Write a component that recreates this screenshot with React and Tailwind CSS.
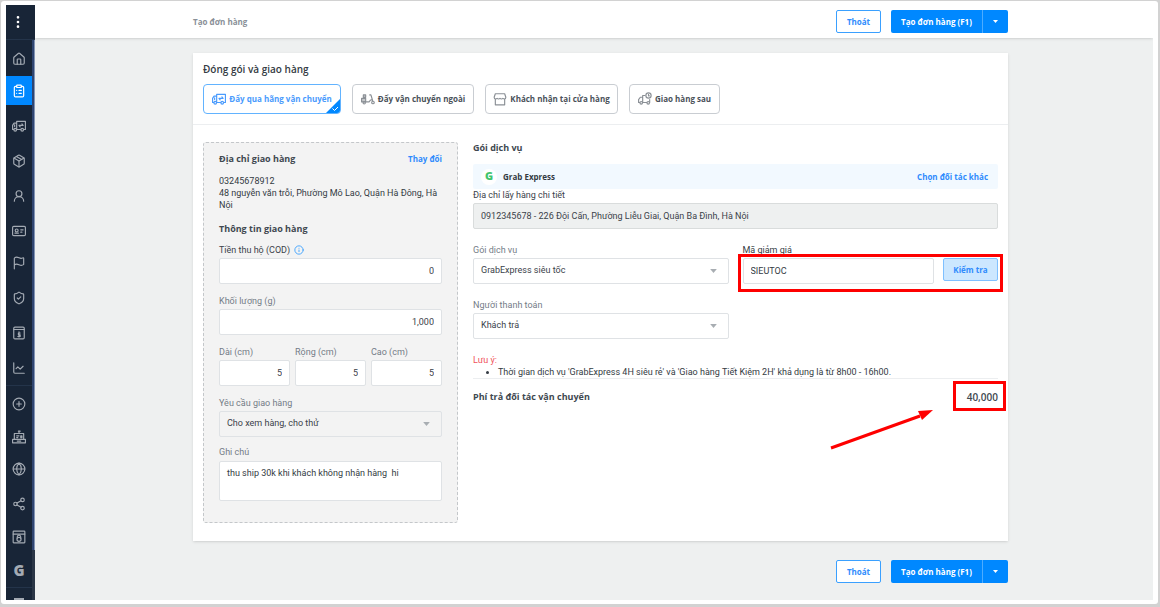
import {
  ChartLine,
  CirclePlus,
  ClipboardList,
  EllipsisVertical,
  Flag,
  Globe,
  House,
  Info,
  Package,
  ShieldCheck,
  Share2,
  UserRound,
} from "lucide-react";
import clsx from "clsx";

function StrokeIcon({ children, className }) {
  return (
    <svg
      viewBox="0 0 24 24"
      fill="none"
      stroke="currentColor"
      strokeWidth="2"
      strokeLinecap="round"
      strokeLinejoin="round"
      className={className}
      aria-hidden="true"
    >
      {children}
    </svg>
  );
}

function TruckIcon({ className }) {
  return (
    <StrokeIcon className={className}>
      <path d="M8 17V4h15v14h-3M8 7H3.500L1 11v7h2M15 18H8" />
      <circle cx="5.500" cy="18.500" r="2.300" />
      <circle cx="17.500" cy="18.500" r="2.300" />
      <path d="M4.500 10v3M12 11h7M12 11l2 2.500M19 11l-2-2.500" />
    </StrokeIcon>
  );
}

function CardIcon({ className }) {
  return (
    <StrokeIcon className={className}>
      <rect x="1" y="4" width="22" height="16" rx="2" />
      <circle cx="8" cy="11" r="2.500" />
      <path d="M5 15.500h6M15 10h4M15 14h2" />
    </StrokeIcon>
  );
}

function CashBookIcon({ className }) {
  return (
    <StrokeIcon className={className}>
      <rect x="3" y="2" width="18" height="20" rx="2" />
      <path d="M3 6h18M12 10v9M14 12h-3v3h3v3h-4" />
    </StrokeIcon>
  );
}

function CounterIcon({ className }) {
  return (
    <StrokeIcon className={className}>
      <path d="M4 16V6h16v10M1 16h22v6H1zM12 6V2M11 2h3M8 10h4M8 13h2M15 10h2v3h-2zM9 19h6" />
    </StrokeIcon>
  );
}

function WindowIcon({ className }) {
  return (
    <StrokeIcon className={className}>
      <rect x="2" y="2" width="20" height="20" rx="1" />
      <path d="M2 7h20M9 14v-2a3 3 0 0 1 6 0v2" />
      <circle cx="12" cy="16" r="3.500" />
    </StrokeIcon>
  );
}

function ScooterIcon({ className }) {
  return (
    <StrokeIcon className={className}>
      <path d="M1 11h7v6H1zM4 5h4v4H4z" fill="currentColor" fillOpacity="0.5" />
      <path d="M15 5h2l3 10M9 17h5c1-3 3-4 5-4" />
      <circle cx="5.500" cy="18.500" r="2" />
      <circle cx="20.500" cy="18" r="2.200" />
    </StrokeIcon>
  );
}

function StoreIcon({ className }) {
  return (
    <StrokeIcon className={className}>
      <path d="M4 3h16l2 6c0 2-1 3-2.500 3S17 11 17 11s-1 1-2.500 1S12 11 12 11s-1 1-2.500 1S7 11 7 11s-1 1-2.500 1S2 11 2 9zM4 12v10h16V12" />
    </StrokeIcon>
  );
}

function LaterIcon({ className }) {
  return (
    <StrokeIcon className={className}>
      <circle cx="18" cy="6" r="4.500" />
      <path d="M18 4v2.500h1.500M12 6H8v12M8 9H4l-3 4v5h2M8 18h7M20 13v5" />
      <circle cx="5.500" cy="18.500" r="2.200" />
      <circle cx="17.500" cy="18.500" r="2.200" />
    </StrokeIcon>
  );
}

function LetterIcon() {
  return <span className="text-[15px] leading-4 font-extrabold">G</span>;
}

const navItems = [
  { label: "Tổng quan", icon: House, className: "mt-1" },
  { label: "Đơn hàng", icon: ClipboardList, className: "mt-[3px]", active: true },
  { label: "Vận chuyển", icon: TruckIcon, className: "mt-1.5" },
  { label: "Sản phẩm", icon: Package, className: "mt-1.5" },
  { label: "Khách hàng", icon: UserRound, className: "mt-1.5" },
  { label: "Thẻ", icon: CardIcon, className: "mt-1.5" },
  { label: "Khuyến mại", icon: Flag, className: "mt-[3px]" },
  { label: "Bảo hành", icon: ShieldCheck, className: "mt-1.5" },
  { label: "Sổ quỹ", icon: CashBookIcon, className: "mt-1.5" },
  { label: "Báo cáo", icon: ChartLine, className: "mt-1.5" },
];

const channelItems = [
  { label: "Thêm kênh", icon: CirclePlus, className: "mt-[3px]" },
  { label: "Bán tại quầy", icon: CounterIcon, className: "mt-1" },
  { label: "Website", icon: Globe, className: "mt-[3px]" },
  { label: "Mạng xã hội", icon: Share2, className: "mt-1.5" },
  { label: "Sàn", icon: WindowIcon, className: "mt-1" },
  { label: "Google", icon: LetterIcon, className: "mt-1" },
];

const shippingMethods = [
  { label: "Đẩy qua hãng vận chuyển", icon: TruckIcon, className: "w-[138px]", active: true },
  { label: "Đẩy vận chuyển ngoài", icon: ScooterIcon, className: "w-[122px]" },
  { label: "Khách nhận tại cửa hàng", icon: StoreIcon, className: "w-[133px]" },
  { label: "Giao hàng sau", icon: LaterIcon, className: "w-[91px]" },
];

function NavItem({ item }) {
  const Icon = item.icon;

  return (
    <a
      href="#"
      aria-label={item.label}
      className={clsx(
        "flex h-[29px] shrink-0 items-center justify-center",
        item.className,
        item.active ? "bg-[#0088ff] text-white" : "text-[#a3aab3]",
      )}
    >
      <Icon className="size-3.5" />
    </a>
  );
}

function Sidebar() {
  return (
    <aside className="flex w-[29px] shrink-0 flex-col overflow-hidden bg-[#182537] font-['Open_Sans',sans-serif]">
      <button
        type="button"
        aria-label="Menu"
        className="flex h-[35px] shrink-0 items-center border-b border-[#24344a] pl-1 text-white"
      >
        <EllipsisVertical className="size-4" strokeWidth={2} />
      </button>
      <div className="flex min-h-0 flex-1">
        <nav className="flex flex-1 flex-col overflow-hidden">
          {navItems.map((item) => (
            <NavItem key={item.label} item={item} />
          ))}
          <div className="mt-[3px] h-px shrink-0 bg-[#24344a]" />
          {channelItems.map((item) => (
            <NavItem key={item.label} item={item} />
          ))}
          <div className="mt-[3px] h-px shrink-0 bg-[#24344a]" />
          <div className="mx-auto mt-2.5 h-3 w-2.5 shrink-0 border-t-2 border-[#a3aab3]" />
        </nav>
        <div className="w-[3px] bg-[#2a3646]">
          <div className="h-[91%] border-r border-[#8294b5] bg-[#2f4570]" />
        </div>
      </div>
    </aside>
  );
}

function ActionButtons() {
  return (
    <div className="flex gap-2.5 font-['Open_Sans',sans-serif] text-[8px] font-bold">
      <button
        type="button"
        className="h-[23px] w-[45px] rounded-[2px] border border-[#3aa0ff] bg-white text-[#2f8bfd]"
      >
        Thoát
      </button>
      <div className="flex h-[23px] overflow-hidden rounded-[2px] bg-[#0088ff] text-white">
        <button type="button" className="w-[92px] border-r border-[#4dacff]">
          Tạo đơn hàng (F1)
        </button>
        <button type="button" aria-label="Tùy chọn khác" className="flex w-[25px] items-center justify-center">
          <Caret className="h-[3px] w-[5px]" />
        </button>
      </div>
    </div>
  );
}

function Caret({ className }) {
  return (
    <svg viewBox="0 0 10 6" fill="currentColor" className={className} aria-hidden="true">
      <path d="M0 0h10L5 6z" />
    </svg>
  );
}

function ShippingMethod({ method }) {
  const Icon = method.icon;

  return (
    <button
      type="button"
      aria-pressed={Boolean(method.active)}
      className={clsx(
        "relative flex h-[30px] items-center justify-center gap-[3px] overflow-hidden rounded-[4px] border font-['Open_Sans',sans-serif] text-[8px] font-bold whitespace-nowrap",
        method.className,
        method.active ? "border-[#62b3ff] text-[#4a9bfd]" : "border-[#c9cdd2] text-[#4a5159]",
      )}
    >
      <Icon className={clsx("size-3.5 shrink-0", !method.active && "text-[#8b9096]")} />
      {method.label}
      {method.active ? (
        <svg viewBox="0 0 14 14" className="absolute right-0 bottom-0 size-3.5" aria-hidden="true">
          <path d="M14 0v14H0z" fill="#0088ff" />
          <path d="M6.500 9.500l2 2 3.500-3.500" fill="none" stroke="#fff" />
        </svg>
      ) : null}
    </button>
  );
}

function TextField({ id, label, value, numeric, hint, strong, readOnly }) {
  return (
    <div className="flex min-w-0 flex-col">
      <label
        htmlFor={id}
        className={clsx("flex items-center gap-1 leading-3", strong ? "text-[#3b424a]" : "text-[#747c87]")}
      >
        {label}
        {hint ? <Info className="size-2.5 text-[#2f9bff]" /> : null}
      </label>
      <input
        id={id}
        type="text"
        defaultValue={value}
        readOnly={readOnly}
        className={clsx(
          "mt-0.5 h-[26px] w-full rounded-[2px] border px-[7px] text-[#3b424a]",
          numeric && "text-right",
          readOnly ? "border-[#d9dcdc] bg-[#eef0f0]" : "border-[#dfe2e5] bg-white",
        )}
      />
    </div>
  );
}

function SelectField({ id, label, value, muted }) {
  return (
    <div className="flex min-w-0 flex-col">
      <label htmlFor={id} className="leading-3 text-[#747c87]">
        {label}
      </label>
      <div className="relative mt-0.5">
        <select
          id={id}
          defaultValue={value}
          className={clsx(
            "h-[26px] w-full appearance-none rounded-[2px] border border-[#dfe2e5] px-[7px] text-[#3b424a]",
            muted ? "bg-[#f3f3f3]" : "bg-white",
          )}
        >
          <option>{value}</option>
        </select>
        <Caret className="pointer-events-none absolute top-[11px] right-3 h-1 w-[7px] text-[#a8adb2]" />
      </div>
    </div>
  );
}

function SectionTitle({ children, className }) {
  return (
    <h3 className={clsx("font-['Open_Sans',sans-serif] text-[9px] font-bold text-[#404850]", className)}>
      {children}
    </h3>
  );
}

function DeliveryPanel() {
  return (
    <section className="rounded-[3px] border border-dashed border-[#c4c7ca] bg-[#f3f3f3] px-[15px] pt-2 pb-[21px]">
      <div className="flex items-center justify-between leading-4">
        <SectionTitle>Địa chỉ giao hàng</SectionTitle>
        <a href="#" className="font-['Open_Sans',sans-serif] text-[8px] font-bold text-[#2f8bfd]">
          Thay đổi
        </a>
      </div>
      <p className="mt-2 leading-3">
        03245678912
        <br />
        48 nguyễn văn trỗi, Phường Mô Lao, Quận Hà Đông, Hà Nội
      </p>
      <SectionTitle className="mt-2.5 leading-4">Thông tin giao hàng</SectionTitle>
      <div className="mt-[7px] flex flex-col gap-[11px]">
        <TextField id="cod" label="Tiền thu hộ (COD)" value="0" numeric hint strong />
        <TextField id="weight" label="Khối lượng (g)" value="1,000" numeric />
        <div className="grid grid-cols-3 gap-[5px]">
          <TextField id="length" label="Dài (cm)" value="5" numeric />
          <TextField id="width" label="Rộng (cm)" value="5" numeric />
          <TextField id="height" label="Cao (cm)" value="5" numeric />
        </div>
        <SelectField id="request" label="Yêu cầu giao hàng" value="Cho xem hàng, cho thử" muted />
      </div>
      <div className="mt-[9px] flex flex-col">
        <label htmlFor="note" className="leading-3 text-[#747c87]">
          Ghi chú
        </label>
        <textarea
          id="note"
          defaultValue="thu ship 30k khi khách không nhận hàng  hi"
          className="mt-[3px] h-10 resize-none rounded-[2px] border border-[#dfe2e5] bg-white px-[7px] py-[5px] leading-3"
        />
      </div>
    </section>
  );
}

function PromoField() {
  return (
    <div className="flex flex-col">
      <label htmlFor="promo" className="leading-3">
        Mã giảm giá
      </label>
      <div className="relative mt-0.5 flex gap-[9px]">
        <input
          id="promo"
          type="text"
          defaultValue="SIEUTOC"
          className="h-[26px] min-w-0 flex-1 rounded-[2px] border border-[#dfe2e5] bg-white px-[7px]"
        />
        <button
          type="button"
          className="h-[23px] w-[55px] rounded-[2px] border border-[#7fc0ff] bg-[#cce7ff] font-['Open_Sans',sans-serif] text-[8px] font-bold text-[#2f8bfd]"
        >
          Kiểm tra
        </button>
        <div className="pointer-events-none absolute -inset-x-[5px] -top-1 -bottom-2 border-3 border-[#fe0000]" />
      </div>
    </div>
  );
}

function ServicePanel() {
  return (
    <section className="min-w-0">
      <SectionTitle className="leading-3">Gói dịch vụ</SectionTitle>
      <div className="mt-2.5 flex h-[25px] items-center rounded-[2px] bg-[#f2f9ff] pr-2.5 pl-2 font-['Open_Sans',sans-serif] text-[8px] font-bold">
        <span className="flex size-4 items-center justify-center rounded-full bg-white text-[11px] font-extrabold text-[#3fc46d]">
          G
        </span>
        <span className="ml-1.5 flex-1">Grab Express</span>
        <a href="#" className="text-[#2f8bfd]">
          Chọn đối tác khác
        </a>
      </div>
      <div className="flex flex-col gap-[15px]">
        <TextField
          id="pickup"
          label="Địa chỉ lấy hàng chi tiết"
          value="0912345678 - 226 Đội Cấn, Phường Liễu Giai, Quận Ba Đình, Hà Nội"
          strong
          readOnly
        />
        <div className="grid grid-cols-2 gap-x-3.5 gap-y-[15px]">
          <SelectField id="service" label="Gói dịch vụ" value="GrabExpress siêu tốc" />
          <PromoField />
          <SelectField id="payer" label="Người thanh toán" value="Khách trả" />
        </div>
        <div className="leading-3">
          <p className="text-[#f0525a]">Lưu ý:</p>
          <ul className="list-disc pl-[25px]">
            <li>
              Thời gian dịch vụ 'GrabExpress 4H siêu rẻ' và 'Giao hàng Tiết Kiệm 2H' khả dụng là từ 8h00 - 16h00.
            </li>
          </ul>
        </div>
      </div>
      <div className="flex items-center justify-between border-t border-[#eceef0] pt-3 font-['Open_Sans',sans-serif] text-[9px] leading-3 font-bold text-[#404850]">
        <span>Phí trả đối tác vận chuyển</span>
        <span className="relative text-[10px] font-semibold">
          40,000
          <span className="pointer-events-none absolute -top-2.5 -right-2 h-[30px] w-[53px] border-3 border-[#fe0000]" />
          <svg
            viewBox="0 0 104 42"
            className="pointer-events-none absolute top-[17px] right-16 h-[42px] w-[104px]"
            aria-hidden="true"
          >
            <path d="M1 40L90 8" stroke="#fe0000" strokeWidth="3" />
            <path d="M103 2L92 12L88 3z" fill="#fe0000" />
          </svg>
        </span>
      </div>
    </section>
  );
}

function App() {
  return (
    <div className="flex h-screen bg-[#d2d2d2] pt-px pr-0.5 pb-[3px] pl-px font-['Roboto','Noto_Sans',sans-serif] text-[9px] text-[#343b43]">
      <div className="flex min-w-0 flex-1 rounded-[3px] bg-white px-[5px] py-1">
        <Sidebar />
        <div className="flex min-w-0 flex-1 flex-col overflow-hidden bg-[#eef0f0]">
          <header className="relative h-[33px] shrink-0 bg-white pl-[13px] shadow">
            <div className="mx-auto flex h-full max-w-[815px] items-center justify-between">
              <h1 className="font-['Open_Sans',sans-serif] text-[8px] font-bold text-[#8a9098]">Tạo đơn hàng</h1>
              <ActionButtons />
            </div>
          </header>
          <main className="pl-[13px]">
            <div className="mx-auto max-w-[815px]">
              <div className="mt-[15px] bg-white pt-2 pb-[18px] shadow-sm">
                <h2 className="px-2.5 font-['Open_Sans',sans-serif] text-[10px] leading-4 font-semibold">
                  Đóng gói và giao hàng
                </h2>
                <div className="mt-[7px] flex gap-[11px] border-b border-[#eceef0] px-2.5 pb-2.5">
                  {shippingMethods.map((method) => (
                    <ShippingMethod key={method.label} method={method} />
                  ))}
                </div>
                <div className="grid grid-cols-[255px_1fr] items-start gap-[15px] px-2.5 pt-[17px]">
                  <DeliveryPanel />
                  <ServicePanel />
                </div>
              </div>
              <div className="mt-[19px] flex justify-end">
                <ActionButtons />
              </div>
            </div>
          </main>
        </div>
      </div>
    </div>
  );
}

export default App;
